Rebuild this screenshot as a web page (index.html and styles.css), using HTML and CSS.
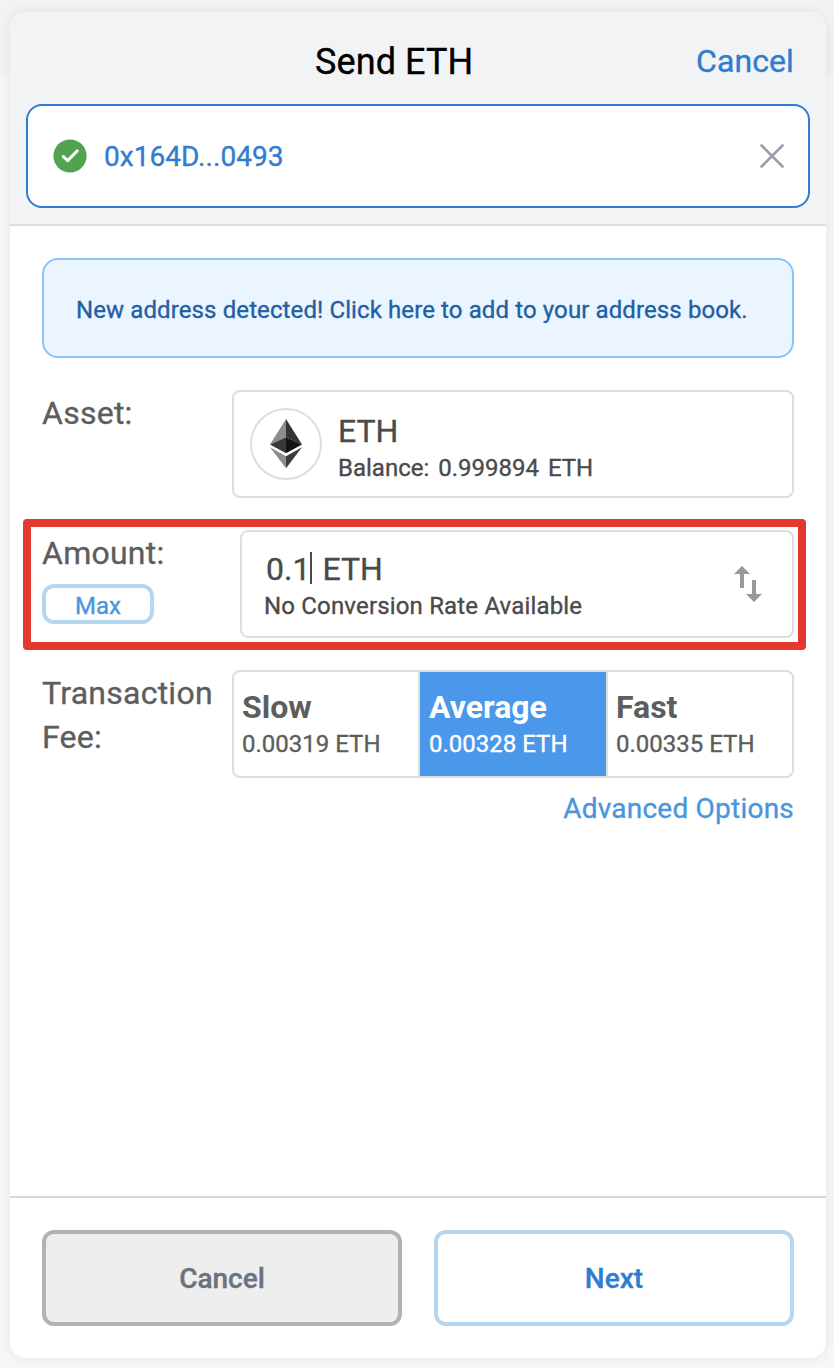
FILE: index.html
```
<!DOCTYPE html>
<html lang="en">
<head>
<meta charset="utf-8">
<title>Send ETH</title>
<link rel="stylesheet" href="styles.css">
</head>
<body>
<main class="card">
  <header class="head">
    <div class="titlebar">
      <h1 class="title">Send ETH</h1>
      <a class="cancel-link">Cancel</a>
    </div>
    <div class="recipient">
      <svg class="check" viewBox="0 0 34 34"><circle cx="17" cy="17" r="16.600" fill="#51a351"/><path d="M10.200 17.500l4.500 4.100 9.600-9.800" fill="none" stroke="#fff" stroke-width="3" stroke-linecap="round" stroke-linejoin="round"/></svg>
      <span class="address">0x164D...0493</span>
      <svg class="clear" viewBox="0 0 24 24"><path d="M1.500 1.500l21 21M22.500 1.500l-21 21" fill="none" stroke="#9b9dae" stroke-width="2.600" stroke-linecap="round"/></svg>
    </div>
  </header>
  <section class="content">
    <div class="notice"><span class="notice-text">New address detected! Click here to add to your address book.</span></div>
    <div class="row asset-row">
      <div class="label">Asset:</div>
      <div class="field asset">
        <div class="token">
          <svg class="eth" viewBox="0 0 32 50"><path fill="#8c8c8c" d="M16 0L0 25.500l16-7.300z"/><path fill="#343434" d="M16 0l16 25.500-16-7.300z"/><path fill="#393939" d="M16 18.200v16.100L0 25.500z"/><path fill="#141414" d="M16 18.200l16 7.300-16 8.800z"/><path fill="#8c8c8c" d="M0 28.300l16 9v12z"/><path fill="#3c3c3b" d="M32 28.300l-16 9v12z"/></svg>
        </div>
        <div class="lines">
          <div class="primary asset-name">ETH</div>
          <div class="secondary balance">Balance: 0.999894 ETH</div>
        </div>
      </div>
    </div>
    <div class="row amount-row">
      <div class="label"><span>Amount:</span><button class="max">Max</button></div>
      <div class="field amount">
        <div class="lines">
          <div class="primary amount-value"><span class="num">0.1</span><span class="caret"></span><span>ETH</span></div>
          <div class="secondary rate">No Conversion Rate Available</div>
        </div>
        <svg class="swap" viewBox="0 0 28 36"><path fill="#999" d="M8 0l8 8h-6v14H6V8H0zM20 36l-8-8h6V14h4v14h6z"/></svg>
      </div>
      <div class="highlight"></div>
    </div>
    <div class="row fee-row">
      <div class="label">Transaction Fee:</div>
      <div class="field fees">
        <div class="fee"><b class="fee-name">Slow</b><span class="fee-value">0.00319 ETH</span></div>
        <div class="fee selected"><b class="fee-name">Average</b><span class="fee-value">0.00328 ETH</span></div>
        <div class="fee"><b class="fee-name">Fast</b><span class="fee-value">0.00335 ETH</span></div>
      </div>
    </div>
    <a class="advanced">Advanced Options</a>
  </section>
  <footer class="foot">
    <button class="btn btn-cancel">Cancel</button>
    <button class="btn btn-next">Next</button>
  </footer>
</main>
</body>
</html>
```

FILE: styles.css
```
* { box-sizing: border-box; }
body {
  margin: 0;
  height: 1368px;
  padding: 12px 8px 10px 10px;
  font-family: Roboto, "Liberation Sans", sans-serif;
  background: linear-gradient(#f2f3f4 76px, #f7f7f7 76px);
  -webkit-text-stroke: .35px currentColor;
}
h1 { margin: 0; font-weight: 400; }
svg { display: block; flex: none; }
.card {
  height: 1346px;
  display: flex;
  flex-direction: column;
  background: #fff;
  border-radius: 16px;
  box-shadow: 0 0 14px rgba(0, 0, 0, .08);
}
.head {
  height: 214px;
  padding: 0 16px;
  background: #f2f3f4;
  border-bottom: 2px solid #dedede;
  border-radius: 16px 16px 0 0;
}
.titlebar {
  height: 92px;
  padding: 6px 16px 0 289px;
  display: flex;
  align-items: center;
  justify-content: space-between;
}
.title { font-size: 36px; line-height: 48px; letter-spacing: .1px; color: #000; margin-top: 2px; }
.cancel-link { font-size: 32px; line-height: 48px; color: #2f7cd0; letter-spacing: .1px; }
.recipient {
  height: 104px;
  padding: 0 24px 0 25px;
  display: flex;
  align-items: center;
  background: #fff;
  border: 2px solid #2f7cd0;
  border-radius: 16px;
}
.check { width: 34px; height: 34px; }
.address { margin-left: 17px; flex: 1; font-size: 28px; color: #2f7cd0; letter-spacing: .05px; }
.clear { width: 24px; height: 24px; }
.content { flex: 1; padding: 32px 32px 0; }
.notice {
  height: 100px;
  display: flex;
  align-items: center;
  padding: 4px 32px 0;
  background: #ebf5ff;
  border: 2px solid #86c5fb;
  border-radius: 16px;
  font-size: 24px;
  color: #1f5fa4;
}
.notice-text { white-space: nowrap; letter-spacing: .11px; }
.row { display: flex; justify-content: space-between; height: 108px; margin-top: 32px; position: relative; }
.label { width: 180px; padding-top: 1px; font-size: 32px; line-height: 44px; letter-spacing: .25px; color: #5d5d5d; }
.label span { display: block; }
.field { width: 562px; display: flex; border: 2px solid #dedede; border-radius: 8px; color: #4a4a4a; }
.asset { padding: 16px; }
.token {
  width: 72px;
  height: 72px;
  display: flex;
  align-items: center;
  justify-content: center;
  border: 2px solid #dedede;
  border-radius: 50%;
}
.eth { width: 32px; height: 50px; }
.primary { font-size: 32px; line-height: 40px; }
.secondary { font-size: 24px; line-height: 34px; white-space: nowrap; }
.balance { word-spacing: 3px; }
.rate { letter-spacing: .17px; }
.asset .lines { margin: 3px 0 0 16px; }
.amount { width: 554px; padding: 17px 30px 0 22px; justify-content: space-between; }
.max {
  display: block;
  width: 112px;
  height: 40px;
  margin-top: 9px;
  padding: 2px 0 0;
  border: 4px solid #b5d6f1;
  border-radius: 12px;
  background: #fff;
  font: 24px/32px Roboto, sans-serif;
  color: #4a96dc;
}
.amount-value { display: flex; align-items: center; padding-left: 2px; }
.caret { width: 2px; height: 32px; margin: 0 10px 2px 0; background: #4a4a4a; }
.swap { width: 28px; height: 36px; margin-top: 17px; }
.highlight {
  position: absolute;
  left: -19px;
  top: -11px;
  width: 782.5px;
  height: 130.5px;
  border: 8px solid #e2382f;
  border-radius: 4px;
}
.fees { display: grid; grid-template-columns: 186px 188px 184px; overflow: hidden; }
.fee { padding: 15px 0 0 8px; color: #5d5d5d; border-right: 2px solid #dedede; }
.fee:last-child { border-right: 0; }
.fee.selected { background: #4b98eb; background-clip: padding-box; color: #fff; padding-left: 9px; }
.fee-name { display: block; font-size: 32px; line-height: 40px; font-weight: 700; -webkit-text-stroke: 0; }
.fee-value { display: block; font-size: 24px; line-height: 34px; white-space: nowrap; }
.advanced { display: block; margin-top: 13px; font-size: 28px; line-height: 36px; letter-spacing: .22px; text-align: right; color: #4a96dc; }
.foot { height: 162px; display: flex; gap: 32px; padding: 32px; border-top: 2px solid #d2d8dd; }
.btn {
  flex: 1;
  height: 96px;
  padding: 2px 0 0;
  border: 4px solid #b5d6f1;
  border-radius: 12px;
  background: #fff;
  font: 500 28px/40px Roboto, sans-serif;
  color: #2f7cd0;
}
.btn-cancel { border-color: #b2b2b2; background: #eee; color: #6a737d; }
```
